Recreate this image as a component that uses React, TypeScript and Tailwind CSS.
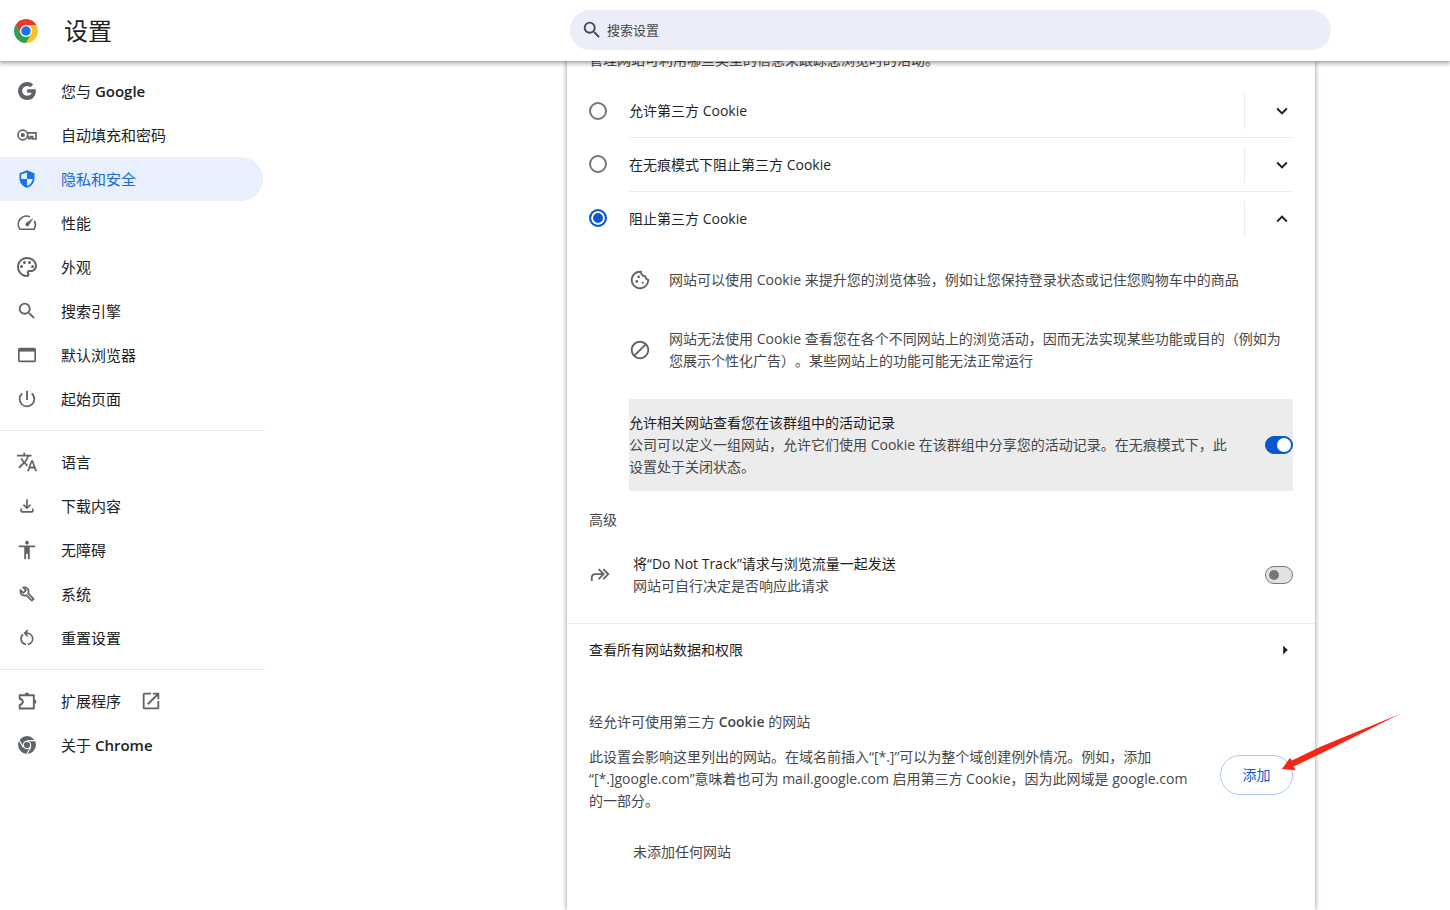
import type { ReactNode } from "react";
import {
  MdAccessibility,
  MdArrowRight,
  MdBlock,
  MdKeyboardArrowDown,
  MdKeyboardArrowUp,
  MdOpenInNew,
  MdOutlineCookie,
  MdOutlinePalette,
  MdPowerSettingsNew,
  MdSearch,
  MdTranslate,
} from "react-icons/md";

function Glyph({ children, box = "0 0 24 24" }: { children: ReactNode; box?: string }) {
  return (
    <svg viewBox={box} className="size-5" fill="none" stroke="currentColor" strokeWidth="2" aria-hidden="true">
      {children}
    </svg>
  );
}

function ChromeLogo() {
  return (
    <svg viewBox="0 0 48 48" className="size-6" aria-hidden="true">
      <path d="M24 12h20.78A24 24 0 0 0 3.22 12l10.39 18Z" fill="#e33b2e" />
      <path d="M34.39 30 24 48a24 24 0 0 0 20.78-36H24Z" fill="#fcc31e" />
      <path d="M13.61 30 3.22 12A24 24 0 0 0 24 48l10.39-18Z" fill="#2da14c" />
      <circle cx="24" cy="24" r="12" fill="#fff" />
      <circle cx="24" cy="24" r="9.5" fill="#1a73e8" />
    </svg>
  );
}

const googleIcon = (
  <Glyph>
    <path
      stroke="none"
      fill="currentColor"
      d="M12.2 9.800v4.400h5.400c-.7 2.200-2.700 3.600-5.400 3.600a5.900 5.900 0 1 1 3.800-10.300l3.400-3.400A10.800 10.800 0 1 0 12.200 22.800c9 0 11.100-8.300 10.200-13Z"
    />
  </Glyph>
);

const keyIcon = (
  <Glyph>
    <circle cx="7" cy="12" r="5.800" />
    <circle cx="7" cy="12" r="2.500" fill="currentColor" stroke="none" />
    <path d="M12 9.500h10.800v7.300h-4V14h-2.300v2.500h-2.500V14H12" />
  </Glyph>
);

const shieldIcon = (
  <Glyph>
    <path
      stroke="none"
      fill="currentColor"
      fillRule="evenodd"
      d="M12 1.500 3 5v6c0 5.300 3.800 10.200 9 11.500 5.200-1.300 9-6.200 9-11.500V5Zm0 2.700V12h6.900c-.6 3.900-3.300 7.300-6.900 8.400V12H5.100V6.600Z"
    />
  </Glyph>
);

const speedIcon = (
  <Glyph>
    <path d="M15.500 4.600A9.800 9.800 0 0 0 3.600 19.500h16.800a9.700 9.700 0 0 0 .2-10.200" />
    <path stroke="none" fill="currentColor" d="m19.800 6-5.900 9.200a2.200 2.200 0 1 1-3.200-3.100Z" />
  </Glyph>
);

const browserIcon = (
  <Glyph>
    <rect x="2.200" y="4.400" width="19.600" height="15.200" rx="1" />
    <path d="M2 6.200h20" strokeWidth="3.400" />
  </Glyph>
);

const downloadIcon = (
  <Glyph box="0 -960 960 960">
    <path
      stroke="none"
      fill="currentColor"
      d="M480-320 280-520l56-58 104 104v-326h80v326l104-104 56 58-200 200ZM240-160q-33 0-56.500-23.500T160-240v-120h80v120h480v-120h80v120q0 33-23.500 56.500T720-160H240Z"
    />
  </Glyph>
);

const wrenchIcon = (
  <Glyph box="0 -960 960 960">
    <path
      stroke="none"
      fill="currentColor"
      d="M686-132 444-376q-20 8-40.500 12t-43.500 4q-100 0-170-70t-70-170q0-36 10-68.500t28-61.500l146 146 72-72-146-146q29-18 61.500-28t68.500-10q100 0 170 70t70 170q0 23-4 43.500T584-516l244 242q12 12 12 29t-12 29l-84 84q-12 12-29 12t-29-12Zm29-85 27-27-256-256q18-20 26-46.500t8-53.500q0-60-38.500-104.500T386-758l74 74q12 12 12 28t-12 28L332-500q-12 12-28 12t-28-12l-74-74q9 57 53.500 95.500T360-440q26 0 53-8t47-25l255 256Z"
    />
  </Glyph>
);

const resetIcon = (
  <Glyph>
    <path d="M7.300 7.700a6.800 6.800 0 0 0 2.700 11.800M14 19.500a6.800 6.800 0 0 0-2-13.300H9.500M12.800 2.500 9.200 6.200l3.600 3.700" />
    <path d="M9.800 19.400l1.200.3M13 19.700l1.200-.3" />
  </Glyph>
);

const extensionIcon = (
  <Glyph>
    <path d="M3.200 5h17v16h-17v-4.300c2.400-.5 3.800-1.900 3.800-3.700s-1.400-3.200-3.800-3.700Z" strokeLinejoin="round" strokeWidth="2.300" />
    <path stroke="none" fill="currentColor" d="M9.200 4.500a2.700 2.700 0 0 1 5.400 0ZM20.500 10.300a2.700 2.700 0 0 1 0 5.400Z" />
  </Glyph>
);

const chromeIcon = (
  <Glyph>
    <circle cx="12" cy="12" r="7.900" strokeWidth="5.600" />
    <circle cx="12" cy="12" r="3.700" fill="currentColor" stroke="none" />
    <path d="M12 6.800h10M7.500 14.600l-5-8.700M16.500 14.600l-5 8.700" stroke="#fff" strokeWidth="1.400" />
  </Glyph>
);

type Item = { id: string; label: ReactNode; icon: ReactNode; active?: boolean; external?: boolean };

const groups: Item[][] = [
  [
    { id: "you", label: <>您与 <span className="font-semibold">Google</span></>, icon: googleIcon },
    { id: "autofill", label: "自动填充和密码", icon: keyIcon },
    { id: "privacy", label: "隐私和安全", icon: shieldIcon, active: true },
    { id: "performance", label: "性能", icon: speedIcon },
    { id: "appearance", label: "外观", icon: <MdOutlinePalette className="size-6 shrink-0" /> },
    { id: "search", label: "搜索引擎", icon: <MdSearch className="size-[22px] shrink-0" /> },
    { id: "browser", label: "默认浏览器", icon: browserIcon },
    { id: "startup", label: "起始页面", icon: <MdPowerSettingsNew className="size-[22px] shrink-0" /> },
  ],
  [
    { id: "languages", label: "语言", icon: <MdTranslate className="size-[22px] shrink-0" /> },
    { id: "downloads", label: "下载内容", icon: downloadIcon },
    { id: "accessibility", label: "无障碍", icon: <MdAccessibility className="size-[22px] shrink-0" /> },
    { id: "system", label: "系统", icon: wrenchIcon },
    { id: "reset", label: "重置设置", icon: resetIcon },
  ],
  [
    { id: "extensions", label: "扩展程序", icon: extensionIcon, external: true },
    { id: "about", label: <>关于 <span className="font-semibold">Chrome</span></>, icon: chromeIcon },
  ],
];

function Sidebar() {
  return (
    <nav className="w-[265px] pt-2" aria-label="设置">
      {groups.map((items, i) => (
        <ul key={i} className={i > 0 ? "mt-[9px] border-t border-[#e6e6e6] pt-[9px]" : ""}>
          {items.map((item) => (
            <li key={item.id}>
              <a
                href="#"
                aria-current={item.active ? "page" : undefined}
                className={`mr-[2px] flex h-11 items-center rounded-r-full pl-[17px] text-[15px] leading-[22px] ${
                  item.active ? "bg-[#e8f0fe] text-[#1967d2]" : "text-[#202124]"
                }`}
              >
                <span className={`mr-6 flex w-5 justify-center ${item.active ? "text-[#1a73e8]" : "text-[#5f6368]"}`}>
                  {item.icon}
                </span>
                <span>{item.label}</span>
                {item.external && <MdOpenInNew className="ml-[19px] size-[22px] text-[#5f6368]" />}
              </a>
            </li>
          ))}
        </ul>
      ))}
    </nav>
  );
}

const choices = [
  { id: "allow", label: "允许第三方 Cookie" },
  { id: "incognito", label: "在无痕模式下阻止第三方 Cookie" },
  { id: "block", label: "阻止第三方 Cookie" },
];

function Choice({ id, label, index }: { id: string; label: string; index: number }) {
  const open = id === "block";
  return (
    <div className="flex items-center">
      <input
        type="radio"
        id={id}
        name="cookies"
        defaultChecked={open}
        className="mr-[22px] size-[18px] shrink-0 appearance-none rounded-full border-2 border-[#747775] checked:border-[#0b57d0] checked:bg-[#0b57d0] checked:shadow-[inset_0_0_0_2px_#fff]"
      />
      <div className={`flex flex-1 items-center ${index > 0 ? "h-[54px] border-t border-[#ececec]" : "h-[53px]"}`}>
        <label htmlFor={id} className="flex-1 text-[#1f1f1f]">
          {label}
        </label>
        <span className="h-9 border-l border-[#ececec]" />
        <button type="button" aria-label={label} aria-expanded={open} className="ml-[26px] text-[22px] text-[#1f1f1f]">
          {open ? <MdKeyboardArrowUp /> : <MdKeyboardArrowDown />}
        </button>
      </div>
    </div>
  );
}

function Toggle({ id, on = false }: { id: string; on?: boolean }) {
  return (
    <input
      type="checkbox"
      role="switch"
      id={id}
      defaultChecked={on}
      className="flex h-[18px] w-7 shrink-0 appearance-none items-center rounded-full border border-[#747775] bg-[#e1e3e1] px-[3px] before:size-[10px] before:rounded-full before:bg-[#747775] checked:justify-end checked:border-[#0b57d0] checked:bg-[#0b57d0] checked:px-px checked:before:size-[14px] checked:before:bg-white"
    />
  );
}

export default function App() {
  return (
    <div className="flex h-screen flex-col overflow-hidden bg-white font-['Open_Sans','Noto_Sans_CJK_SC',sans-serif] text-[14px] leading-[22px] text-[#474747] [text-spacing-trim:space-all]">
      <header className="z-10 grid h-[61px] shrink-0 grid-cols-[570px_minmax(0,761px)_1fr] items-center bg-white shadow-[0_1px_5px_1px_rgba(0,0,0,0.4)]">
        <div className="flex items-center pl-[14px]">
          <ChromeLogo />
          <h1 className="ml-[26px] text-[24px] leading-8 text-[#202124]">设置</h1>
        </div>
        <label className="mb-px flex h-10 items-center rounded-full bg-[#ebeef8] pl-[11px]">
          <MdSearch className="size-[22px] text-[#474747]" />
          <input
            type="search"
            aria-label="搜索设置"
            placeholder="搜索设置"
            className="ml-1 flex-1 bg-transparent text-[13px] outline-none placeholder:text-[#474747]"
          />
        </label>
      </header>

      <div className="grid min-h-0 flex-1 grid-cols-[567px_minmax(0,748px)_1fr]">
        <Sidebar />
        <main className="shadow-[0_0_5px_rgba(0,0,0,0.45)]">
          <section className="-mt-3 px-[22px]">
            <p className="pb-[13px]">管理网站可利用哪些类型的信息来跟踪您浏览时的活动。</p>
            {choices.map((c, i) => (
              <Choice key={c.id} id={c.id} label={c.label} index={i} />
            ))}
            <div className="pl-10">
              <ul className="flex flex-col gap-[37px] pt-6 pb-[27px]">
                <li className="flex items-center gap-[18px]">
                  <MdOutlineCookie className="size-[22px] shrink-0 text-[#5f6368]" />
                  网站可以使用 Cookie 来提升您的浏览体验，例如让您保持登录状态或记住您购物车中的商品
                </li>
                <li className="flex items-center gap-[18px]">
                  <MdBlock className="size-[22px] shrink-0 text-[#5f6368]" />
                  网站无法使用 Cookie 查看您在各个不同网站上的浏览活动，因而无法实现某些功能或目的（例如为您展示个性化广告）。某些网站上的功能可能无法正常运行
                </li>
              </ul>
              <div className="flex items-center justify-between gap-7 bg-[#ececec] py-[13px]">
                <label htmlFor="related">
                  <span className="block text-[#1f1f1f]">允许相关网站查看您在该群组中的活动记录</span>
                  公司可以定义一组网站，允许它们使用 Cookie 在该群组中分享您的活动记录。在无痕模式下，此设置处于关闭状态。
                </label>
                <Toggle id="related" on />
              </div>
            </div>
            <h2 className="mt-[18px]">高级</h2>
            <div className="mt-[22px] flex items-center pb-[26px]">
              <svg viewBox="0 0 24 24" className="size-[22px] shrink-0 text-[#5f6368]" fill="none" stroke="currentColor" strokeWidth="2" aria-hidden="true">
                <path d="M3 18.500V15q0-4 4-4h9M10.500 5.500l5.500 5.500-5.500 5.500M15.500 5.500 21 11l-5.500 5.500" />
              </svg>
              <label htmlFor="dnt" className="ml-[22px] flex-1">
                <span className="block text-[#1f1f1f]">将“Do Not Track”请求与浏览流量一起发送</span>
                网站可自行决定是否响应此请求
              </label>
              <Toggle id="dnt" />
            </div>
          </section>
          <a href="#" className="flex h-[53px] items-center justify-between border-t border-[#ececec] pr-[19px] pl-[22px] text-[#1f1f1f]">
            查看所有网站数据和权限
            <MdArrowRight className="size-[22px]" />
          </a>
          <section className="px-[22px] pt-[35px]">
            <h2>
              经允许可使用第三方 <span className="font-semibold">Cookie</span> 的网站
            </h2>
            <div className="mt-[13px] flex items-start justify-between gap-7">
              <p>
                此设置会影响这里列出的网站。在域名前插入“[*.]”可以为整个域创建例外情况。例如，添加
                <wbr />
                “[*.]google.com”意味着也可为 mail.google.com 启用第三方 Cookie，因为此网域是 google.com 的一部分。
              </p>
              <div className="relative mt-[9px] shrink-0">
                <button type="button" className="h-10 w-[73px] rounded-full border border-[#a8c7fa] text-[#0b57d0]">
                  添加
                </button>
                <svg viewBox="0 0 122 60" width="122" height="60" className="pointer-events-none absolute -top-[43px] left-[60px]" fill="#fb2314" aria-hidden="true">
                  <path d="M120 2 41 34.500 12 48.500 9.800 46 2 57l13.700 1.300-2.200-3.800L42 41Z" />
                </svg>
              </div>
            </div>
            <p className="mt-[29px] pl-11">未添加任何网站</p>
          </section>
        </main>
      </div>
    </div>
  );
}
